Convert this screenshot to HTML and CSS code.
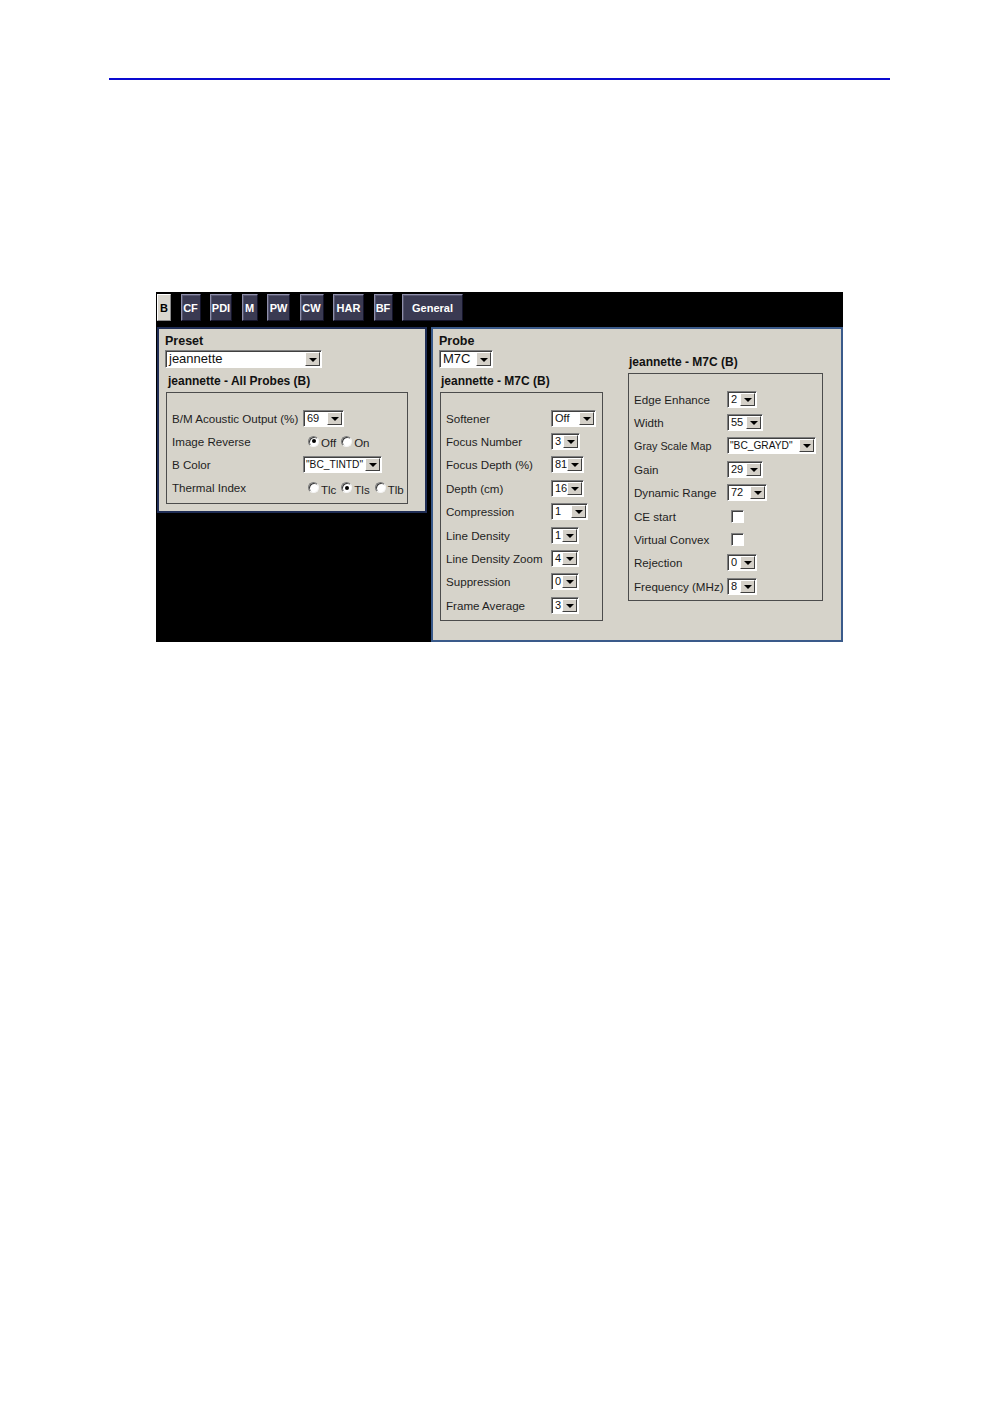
FILE: index.html
```html
<!DOCTYPE html>
<html>
<head>
<meta charset="utf-8">
<link rel="stylesheet" href="styles.css">
</head>
<body>
<div class="page">
  <div class="rule"></div>
  <div class="shot">
    <div class="tabs">
      <div class="tab cur t-b">B</div>
      <div class="tab t-cf">CF</div>
      <div class="tab t-pdi">PDI</div>
      <div class="tab t-m">M</div>
      <div class="tab t-pw">PW</div>
      <div class="tab t-cw">CW</div>
      <div class="tab t-har">HAR</div>
      <div class="tab t-bf">BF</div>
      <div class="tab t-gen">General</div>
    </div>
    <div class="panels">
      <div class="panel left">
        <div class="hd">Preset</div>
        <div class="sel big w157"><span class="v">jeannette</span><span class="btn"><i></i></span></div>
        <div class="sub">jeannette - All Probes (B)</div>
        <div class="grp g-left">
          <div class="row"><span class="lbl">B/M Acoustic Output (%)</span><div class="sel w41"><span class="v">69</span><span class="btn"><i></i></span></div></div>
          <div class="row"><span class="lbl">Image Reverse</span>
            <div class="radios"><span class="radio on"></span><span class="rt">Off</span><span class="radio"></span><span class="rt">On</span></div>
          </div>
          <div class="row"><span class="lbl">B Color</span><div class="sel w79"><span class="v long">"BC_TINTD"</span><span class="btn"><i></i></span></div></div>
          <div class="row"><span class="lbl">Thermal Index</span>
            <div class="radios"><span class="radio"></span><span class="rt">Tlc</span><span class="radio on"></span><span class="rt">Tls</span><span class="radio"></span><span class="rt">Tlb</span></div>
          </div>
        </div>
      </div>
      <div class="panel right">
        <div class="col c1">
          <div class="hd">Probe</div>
          <div class="sel big w54"><span class="v">M7C</span><span class="btn"><i></i></span></div>
          <div class="sub">jeannette - M7C (B)</div>
          <div class="grp g-mid">
            <div class="row"><span class="lbl">Softener</span><div class="sel w45"><span class="v">Off</span><span class="btn"><i></i></span></div></div>
            <div class="row"><span class="lbl">Focus Number</span><div class="sel w29"><span class="v">3</span><span class="btn"><i></i></span></div></div>
            <div class="row"><span class="lbl">Focus Depth (%)</span><div class="sel w33"><span class="v">81</span><span class="btn"><i></i></span></div></div>
            <div class="row"><span class="lbl">Depth (cm)</span><div class="sel w33"><span class="v">16</span><span class="btn"><i></i></span></div></div>
            <div class="row"><span class="lbl">Compression</span><div class="sel w37"><span class="v">1</span><span class="btn"><i></i></span></div></div>
            <div class="row"><span class="lbl">Line Density</span><div class="sel w28"><span class="v">1</span><span class="btn"><i></i></span></div></div>
            <div class="row"><span class="lbl">Line Density Zoom</span><div class="sel w28"><span class="v">4</span><span class="btn"><i></i></span></div></div>
            <div class="row"><span class="lbl">Suppression</span><div class="sel w28"><span class="v">0</span><span class="btn"><i></i></span></div></div>
            <div class="row"><span class="lbl">Frame Average</span><div class="sel w28"><span class="v">3</span><span class="btn"><i></i></span></div></div>
          </div>
        </div>
        <div class="col c2">
          <div class="sub">jeannette - M7C (B)</div>
          <div class="grp g-right">
            <div class="row"><span class="lbl">Edge Enhance</span><div class="sel w30"><span class="v">2</span><span class="btn"><i></i></span></div></div>
            <div class="row"><span class="lbl">Width</span><div class="sel w36"><span class="v">55</span><span class="btn"><i></i></span></div></div>
            <div class="row"><span class="lbl small">Gray Scale Map</span><div class="sel w89"><span class="v long">"BC_GRAYD"</span><span class="btn"><i></i></span></div></div>
            <div class="row"><span class="lbl">Gain</span><div class="sel w36"><span class="v">29</span><span class="btn"><i></i></span></div></div>
            <div class="row"><span class="lbl">Dynamic Range</span><div class="sel w40"><span class="v">72</span><span class="btn"><i></i></span></div></div>
            <div class="row"><span class="lbl">CE start</span><span class="chk"></span></div>
            <div class="row"><span class="lbl">Virtual Convex</span><span class="chk"></span></div>
            <div class="row"><span class="lbl">Rejection</span><div class="sel w30"><span class="v">0</span><span class="btn"><i></i></span></div></div>
            <div class="row"><span class="lbl">Frequency (MHz)</span><div class="sel w30"><span class="v">8</span><span class="btn"><i></i></span></div></div>
          </div>
        </div>
      </div>
    </div>
  </div>
</div>
</body>
</html>
```

FILE: styles.css
```css
body {
  margin: 0;
  background: #fff;
  font-family: "Liberation Sans", Arial, sans-serif;
}
.page {
  width: 998px;
}
.rule {
  margin: 78px 0 0 109px;
  width: 781px;
  height: 2px;
  background: #0a0ad0;
}
.shot {
  margin: 212px 0 0 156px;
  width: 687px;
  height: 350px;
  background: #000;
  display: flex;
  flex-direction: column;
}
.tabs {
  height: 35px;
  box-sizing: border-box;
  padding: 2px 0 0 1px;
  display: flex;
  gap: 9.5px;
  align-items: flex-start;
}
.tab {
  height: 27px;
  box-sizing: border-box;
  background: #3a3a52;
  border: 1px solid;
  border-color: #8e8eaa #14142a #14142a #8e8eaa;
  box-shadow: inset 1px 1px 0 #55556e;
  color: #fff;
  font: bold 11px "Liberation Sans", Arial, sans-serif;
  display: flex;
  align-items: center;
  justify-content: center;
}
.tab.cur {
  background: #dad7cf;
  color: #000;
  border-color: #fff #8a8a8a #8a8a8a #fff;
  box-shadow: none;
}
.t-b { width: 14px; }
.t-cf { width: 20px; }
.t-pdi { width: 22px; }
.t-m { width: 16px; }
.t-pw { width: 23px; }
.t-cw { width: 24px; }
.t-har { width: 31px; }
.t-bf { width: 19px; }
.t-gen { width: 61px; }

.panels {
  display: flex;
  gap: 4px;
  padding-left: 1px;
  align-items: flex-start;
}
.panel {
  box-sizing: border-box;
  background: #d6d3ca;
  border: 2px solid #1f2d55;
}
.left {
  width: 270px;
  height: 186px;
  padding: 5px 0 0 6px;
}
.right {
  width: 412px;
  height: 315px;
  display: flex;
  padding-left: 6px;
  border-color: #3a5a8a;
}
.hd {
  font: bold 12.5px/14px "Liberation Sans", Arial, sans-serif;
  color: #111;
}
.sub {
  font: bold 12px/14px "Liberation Sans", Arial, sans-serif;
  color: #111;
  margin-top: 6px;
}
.left .sub { padding-left: 3px; }
.c1 .sub { padding-left: 2px; }
.c2 .sub { padding-left: 1px; margin-top: 0; }

.c1 {
  width: 164px;
  padding-top: 5px;
}
.c2 {
  margin-left: 25px;
  padding-top: 26px;
}
.grp {
  box-sizing: border-box;
  border: 1px solid #4c4c4c;
  padding: 13.5px 0 0 5px;
  margin-top: 4px;
}
.g-left { width: 242px; height: 112px; margin-left: 1px; }
.g-mid { width: 163px; height: 229px; margin-left: 1px; }
.g-right { width: 195px; height: 228px; }

.row {
  height: 23.38px;
  display: flex;
  align-items: center;
}
.g-left .row { height: 23.2px; }
.lbl {
  flex: none;
  font-size: 11.6px;
  color: #1e1e1e;
}
.lbl.small { font-size: 10.8px; }
.g-left .lbl { width: 131px; }
.g-mid .lbl { width: 105px; }
.g-right .lbl { width: 93px; }

.sel {
  box-sizing: border-box;
  height: 17px;
  display: flex;
  background: #fff;
  border: 1px solid;
  border-color: #808080 #fff #fff #808080;
  box-shadow: inset 1px 1px 0 #404040;
  flex: none;
}
.sel.big {
  height: 18px;
  margin-top: 2px;
}
.sel .v {
  flex: 1;
  padding-left: 3px;
  font-size: 11px;
  line-height: 15px;
  color: #111;
  white-space: nowrap;
  overflow: hidden;
}
.sel .v.long {
  font-size: 10.2px;
  padding-left: 2px;
}
.sel.big .v {
  font-size: 13px;
  line-height: 16px;
}
.sel .btn {
  box-sizing: border-box;
  width: 15px;
  margin: 1px 1px 1px 0;
  background: #d4d0c8;
  border: 1px solid;
  border-color: #fff #404040 #404040 #fff;
  display: flex;
  align-items: center;
  justify-content: center;
  flex: none;
}
.sel .btn i {
  width: 0;
  height: 0;
  border-left: 4px solid transparent;
  border-right: 4px solid transparent;
  border-top: 4px solid #000;
  margin-top: 1px;
}
.w28 { width: 28px; }
.w29 { width: 29px; }
.w30 { width: 30px; }
.w33 { width: 33px; }
.w36 { width: 36px; }
.w37 { width: 37px; }
.w40 { width: 40px; }
.w41 { width: 41px; }
.w45 { width: 45px; }
.w54 { width: 54px; }
.w79 { width: 79px; }
.w89 { width: 89px; }
.w157 { width: 157px; }

.radios {
  display: flex;
  align-items: center;
  margin-left: 5px;
}
.radio {
  box-sizing: border-box;
  width: 11px;
  height: 11px;
  border-radius: 50%;
  background: #fff;
  border: 1px solid;
  border-color: #7a7a7a #f4f4f4 #f4f4f4 #7a7a7a;
  box-shadow: inset 1px 1px 0 #3c3c3c;
  display: flex;
  align-items: center;
  justify-content: center;
  flex: none;
}
.radio.on::after {
  content: "";
  width: 4px;
  height: 4px;
  border-radius: 50%;
  background: #000;
}
.rt {
  font-size: 11.5px;
  color: #1e1e1e;
  padding-top: 4px;
  margin: 0 5px 0 2px;
}
.chk {
  box-sizing: border-box;
  width: 13px;
  height: 13px;
  margin-left: 4px;
  background: #fff;
  border: 1px solid;
  border-color: #808080 #fff #fff #808080;
  box-shadow: inset 1px 1px 0 #404040;
  flex: none;
}
```
